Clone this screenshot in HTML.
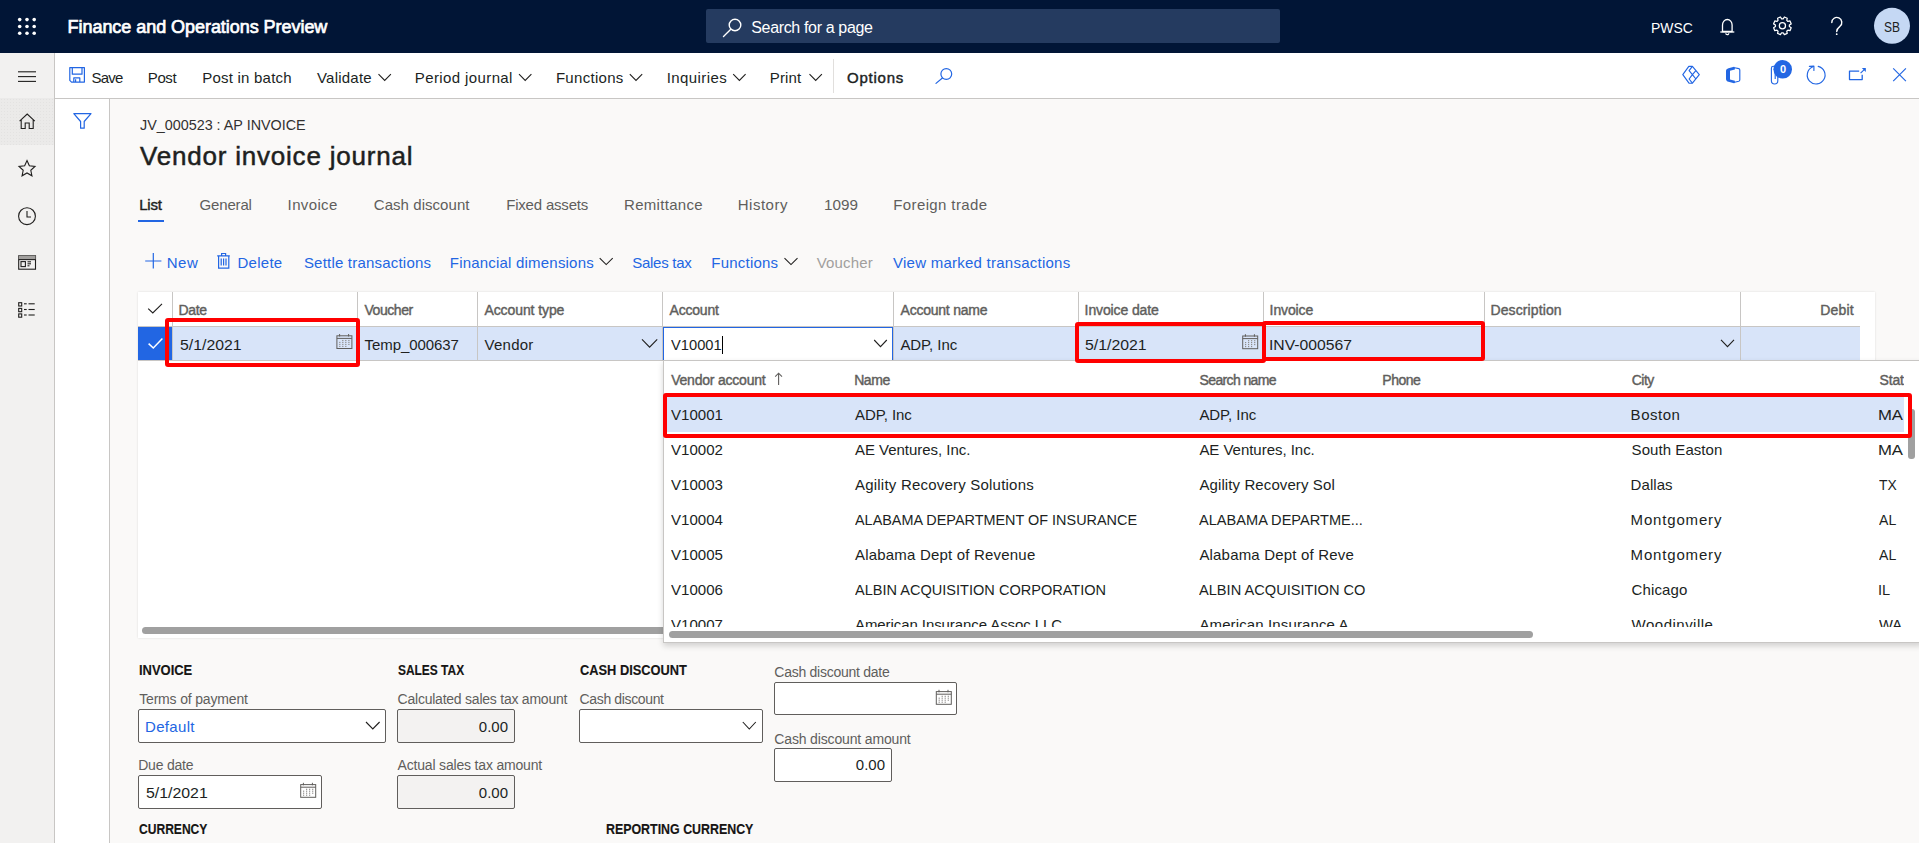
<!DOCTYPE html>
<html><head><meta charset="utf-8">
<style>
html,body{margin:0;padding:0;}
body{width:1919px;height:843px;overflow:hidden;position:relative;background:#faf9f8;font-family:"Liberation Sans",sans-serif;}
.a{position:absolute;box-sizing:border-box;}
.t{position:absolute;white-space:nowrap;font-family:"Liberation Sans",sans-serif;}
svg{position:absolute;overflow:visible;}
.red{position:absolute;box-sizing:border-box;border:4.4px solid #ff0000;border-radius:3px;}
.sb{position:absolute;background:#a0a0a0;border-radius:4px;}
</style></head><body>
<!-- header -->
<div class="a" style="left:0;top:0;width:1919px;height:53px;background:#011536"></div>
<svg style="left:0;top:0" width="60" height="53">
  <g fill="#fff"><circle cx="19.7" cy="19.6" r="1.8"/><circle cx="27" cy="19.6" r="1.8"/><circle cx="34.2" cy="19.6" r="1.8"/>
  <circle cx="19.7" cy="26.5" r="1.8"/><circle cx="27" cy="26.5" r="1.8"/><circle cx="34.2" cy="26.5" r="1.8"/>
  <circle cx="19.7" cy="33.3" r="1.8"/><circle cx="27" cy="33.3" r="1.8"/><circle cx="34.2" cy="33.3" r="1.8"/></g>
</svg>
<div class="a" style="left:706px;top:9px;width:574px;height:34px;background:#253b60;border-radius:2px"></div>
<svg style="left:0;top:0" width="1919" height="53">
  <g fill="none" stroke="#fff" stroke-width="1.4" stroke-linecap="round">
    <circle cx="735" cy="25" r="5.8"/><line x1="730.8" y1="29.3" x2="723.5" y2="36.4"/>
  </g>
  <!-- bell -->
  <g fill="none" stroke="#fff" stroke-width="1.3">
    <path d="M1722.5 31.5 V25 a4.8 5.5 0 0 1 9.6 0 V31.5 Z" stroke-linejoin="round"/>
    <line x1="1720.3" y1="32" x2="1734.3" y2="32"/>
    <path d="M1725.8 33.2 a1.5 1.5 0 0 0 3 0"/>
  </g>
  <!-- gear -->
  <g fill="none" stroke="#fff" stroke-width="1.25" stroke-linejoin="round">
    <path d="M1789.36 26.59 L1791.19 27.75 L1789.99 30.64 L1787.88 30.16 L1786.76 31.28 L1787.24 33.39 L1784.35 34.59 L1783.19 32.76 L1781.61 32.76 L1780.45 34.59 L1777.56 33.39 L1778.04 31.28 L1776.92 30.16 L1774.81 30.64 L1773.61 27.75 L1775.44 26.59 L1775.44 25.01 L1773.61 23.85 L1774.81 20.96 L1776.92 21.44 L1778.04 20.32 L1777.56 18.21 L1780.45 17.01 L1781.61 18.84 L1783.19 18.84 L1784.35 17.01 L1787.24 18.21 L1786.76 20.32 L1787.88 21.44 L1789.99 20.96 L1791.19 23.85 L1789.36 25.01 Z"/>
    <circle cx="1782.4" cy="25.8" r="3.1"/>
  </g>
  <!-- question -->
  <g fill="none" stroke="#fff" stroke-width="1.4" stroke-linecap="round">
    <path d="M1831.8 22.5 a5 5 0 1 1 8.2 3.8 c-2 1.6 -3.3 2.6 -3.3 5.2"/>
  </g>
  <circle cx="1836.7" cy="34.2" r="0.9" fill="#fff"/>
  <circle cx="1892" cy="25.8" r="18" fill="#c5d8f4"/>
</svg>

<!-- left nav -->
<div class="a" style="left:0;top:53px;width:55px;height:790px;background:#f2f1f0;border-right:1px solid #c8c6c4"></div>
<div class="a" style="left:0;top:98px;width:54px;height:47px;background-color:#ebeae9;background-image:radial-gradient(#e3e2e1 0.6px,transparent 0.7px);background-size:3px 3px"></div>
<svg style="left:0;top:0" width="55" height="843">
  <g fill="none" stroke="#201f1e" stroke-width="1.1">
    <line x1="18" y1="71.8" x2="36" y2="71.8"/><line x1="18" y1="76.6" x2="36" y2="76.6"/><line x1="18" y1="81.4" x2="36" y2="81.4"/>
    <!-- home -->
    <path d="M19.6 121.2 L27.2 114 L34.8 121.2 M21.2 119.8 V128.5 H25.2 V123 H29.2 V128.5 H33.2 V119.8" stroke-linejoin="miter"/>
    <!-- star -->
    <path d="M27.00 160.60 L29.35 165.76 L34.99 166.40 L30.80 170.24 L31.94 175.80 L27.00 173.00 L22.06 175.80 L23.20 170.24 L19.01 166.40 L24.65 165.76 Z" stroke-linejoin="miter"/>
    <!-- clock -->
    <circle cx="27" cy="216.2" r="8.4"/><path d="M27 211 V217 H31"/>
    <!-- workspace -->
    <rect x="18.7" y="255.8" width="16.8" height="13.4"/><rect x="18.7" y="255.8" width="16.8" height="3.6" fill="#a19f9d" stroke="none"/><line x1="18.7" y1="259.6" x2="35.5" y2="259.6"/>
    <rect x="21" y="261.6" width="4.4" height="5"/><line x1="27.5" y1="261.8" x2="31" y2="261.8"/><line x1="27.5" y1="263.8" x2="31" y2="263.8"/><line x1="27.5" y1="265.8" x2="29.5" y2="265.8"/>
    <!-- list -->
    <rect x="18.7" y="302.7" width="3" height="3.3"/><rect x="18.7" y="308.4" width="3" height="3.3"/><rect x="18.7" y="313.9" width="3" height="3.3"/>
    <line x1="24" y1="303.8" x2="26.7" y2="303.8"/><line x1="28.5" y1="303.8" x2="34.7" y2="303.8"/>
    <line x1="24" y1="309.5" x2="26.7" y2="309.5"/><line x1="28.5" y1="309.5" x2="34.7" y2="309.5"/>
    <line x1="24" y1="315" x2="26.7" y2="315"/><line x1="28.5" y1="315" x2="34.7" y2="315"/>
  </g>
</svg>

<!-- action bar -->
<div class="a" style="left:55px;top:53px;width:1864px;height:46px;background:#fff;border-bottom:1px solid #c8c6c4"></div>
<div class="a" style="left:833px;top:59px;width:1px;height:34px;background:#e1dfdd"></div>
<svg style="left:0;top:0" width="1919" height="99">
  <!-- save -->
  <g fill="none" stroke="#2266e3" stroke-width="1.2" stroke-linejoin="round">
    <path d="M69.8 67.7 H84.4 V82.1 H71.5 L69.8 80.4 Z"/><path d="M72.3 67.7 V74.2 H82 V67.7"/><path d="M73.8 82.1 V77.9 H79.8 V82.1"/><path d="M75.6 79.2 V82"/>
  </g>
  <g fill="none" stroke="#201f1e" stroke-width="1.1">
    <path d="M378.5 74.2 L384.7 80.4 L390.9 74.2"/>
    <path d="M519 74.2 L525.2 80.4 L531.4 74.2"/>
    <path d="M629.8 74.2 L636 80.4 L642.2 74.2"/>
    <path d="M733.2 74.2 L739.4 80.4 L745.6 74.2"/>
    <path d="M809.5 74.2 L815.7 80.4 L821.9 74.2"/>
  </g>
  <!-- search icon -->
  <g fill="none" stroke="#2266e3" stroke-width="1.2" stroke-linecap="round">
    <circle cx="946.3" cy="74" r="5.4"/><line x1="942.4" y1="78" x2="936" y2="83.4"/>
  </g>
  <!-- right icons -->
  <g fill="none" stroke="#2266e3" stroke-width="1.15" stroke-linejoin="round">
    <path d="M1682.8 74.6 L1688.8 66.4 L1692.4 66.4 L1699.3 74.6 L1692.4 83.2 L1689 83.2 Z"/>
    <path d="M1692.4 66.4 L1689.1 70.6 L1692.4 74.6 L1689.1 79 L1692.4 83.2 M1692.4 74.6 L1695.9 70.6 M1692.4 74.6 L1695.9 79"/>
    <!-- office -->
    <path d="M1734.6 67.8 L1738.8 68.6 Q1739.8 68.9 1739.8 70 V79.8 Q1739.8 80.9 1738.8 81.2 L1734.6 82.2"/>
    <!-- paperclip -->
    <path d="M1777.8 72 V80.8 a3.2 3.2 0 0 1 -6.4 0 V68.2 a1.9 1.9 0 0 1 3.8 0 V79"/>
    <!-- refresh -->
    <path d="M1818.2 66.4 A8.9 8.9 0 1 1 1812.4 67" stroke-linecap="round"/><path d="M1809.4 66.4 L1813.9 66.1 L1813.9 70.5" stroke-linecap="round"/>
    <!-- open new -->
    <path d="M1859.2 71.1 H1849.5 V79.6 H1862.2 V74.8" stroke-width="1.3"/><path d="M1860.6 73.2 L1865 68.8"/>
    <!-- close -->
    <path d="M1893.2 68.3 L1905.9 81.2 M1905.9 68.3 L1893.2 81.2"/>
  </g>
  <path d="M1726 71 C1726 69.5 1727 68.6 1728.5 68.2 L1734 66.8 L1734.9 67.2 L1734.9 69.5 L1730 70.8 V79.5 L1734.9 80.7 V83 L1734 83.3 L1728.5 81.8 C1727 81.4 1726 80.5 1726 79 Z" fill="#2266e3"/>
  <path d="M1861.8 68.1 H1865.8 V72 Z" fill="#2266e3"/>
  <circle cx="1782.7" cy="69.3" r="9.3" fill="#2266e3"/>
  <text x="1783" y="72.9" fill="#fff" font-size="11" font-weight="700" text-anchor="middle" font-family="Liberation Sans">0</text>
</svg>

<!-- filter pane -->
<div class="a" style="left:55px;top:99px;width:55px;height:744px;background:#fff;border-right:1px solid #c8c6c4"></div>
<svg style="left:0;top:0" width="110" height="140">
  <path d="M73.8 113.6 H91 L84.2 121.5 V128.2 H80.6 V121.5 Z" fill="none" stroke="#2266e3" stroke-width="1.2" stroke-linejoin="round"/>
</svg>

<!-- tab underline -->
<div class="a" style="left:138px;top:220px;width:26px;height:2px;background:#2266e3"></div>

<!-- toolbar icons -->
<svg style="left:0;top:0" width="1919" height="290">
  <g fill="none" stroke="#2266e3" stroke-width="1.2">
    <path d="M153.3 253 V268.5 M145.2 261 H161.4"/>
    <path d="M217.2 255.8 H229.8 M221.6 255.8 V253.5 H225.6 V255.8 M218.6 255.8 V268.2 H228.8 V255.8 M221.2 258.6 V265.6 M223.6 258.6 V265.6 M226 258.6 V265.6"/>
  </g>
  <g fill="none" stroke="#201f1e" stroke-width="1.1">
    <path d="M599.7 258.2 L606.2 264.6 L612.7 258.2"/>
    <path d="M784.5 258.2 L791 264.6 L797.5 258.2"/>
  </g>
</svg>

<!-- grid panel -->
<div class="a" style="left:138px;top:292px;width:1737px;height:346px;background:#fff;box-shadow:0 0 2px rgba(0,0,0,0.12)"></div>
<div class="a" style="left:138px;top:326px;width:1722px;height:1px;background:#c8c6c4"></div>
<div class="a" style="left:172px;top:327px;width:1688px;height:33px;background:#d8e4f9"></div>
<div class="a" style="left:138px;top:327px;width:34px;height:34px;background:#2266e3"></div>
<div class="a" style="left:138px;top:360px;width:1722px;height:1.4px;background:#c8c6c4"></div>
<!-- separators -->
<div class="a" style="left:172px;top:292px;width:1px;height:68px;background:#c8c6c4"></div>
<div class="a" style="left:357px;top:292px;width:1px;height:68px;background:#c8c6c4"></div>
<div class="a" style="left:477px;top:292px;width:1px;height:68px;background:#c8c6c4"></div>
<div class="a" style="left:662px;top:292px;width:1px;height:68px;background:#c8c6c4"></div>
<div class="a" style="left:893px;top:292px;width:1px;height:68px;background:#c8c6c4"></div>
<div class="a" style="left:1078px;top:292px;width:1px;height:68px;background:#c8c6c4"></div>
<div class="a" style="left:1263px;top:292px;width:1px;height:68px;background:#c8c6c4"></div>
<div class="a" style="left:1484px;top:292px;width:1px;height:68px;background:#c8c6c4"></div>
<div class="a" style="left:1740px;top:292px;width:1px;height:68px;background:#c8c6c4"></div>
<!-- account input -->
<div class="a" style="left:662.5px;top:327px;width:230.5px;height:33px;background:#fff;border:1.3px solid #2266e3;border-bottom:none"></div>
<div class="a" style="left:721.6px;top:336px;width:1.3px;height:18px;background:#000"></div>
<svg style="left:0;top:0" width="1919" height="400">
  <g fill="none" stroke="#201f1e" stroke-width="1.1">
    <path d="M148.2 308.6 L152.8 313 L162 303.8"/>
    <path d="M642 339.4 L649.6 347.2 L657.2 339.4"/>
    <path d="M874.2 340 L880.5 346.6 L886.8 340"/>
    <path d="M1721 339.8 L1727.5 346.6 L1734 339.8"/>
  </g>
  <path d="M148.6 343.6 L153.3 348 L162.4 338.6" fill="none" stroke="#fff" stroke-width="1.5"/>
  <g transform="translate(336.4 334)">
  <g fill="none" stroke="#605e5c" stroke-width="1"><rect x="0.5" y="1.8" width="15" height="12.7"/><line x1="0.5" y1="4.4" x2="15.5" y2="4.4"/><line x1="3.2" y1="0" x2="3.2" y2="2.5"/><line x1="12.2" y1="0" x2="12.2" y2="2.5"/></g>
  <g fill="#8a8886"><rect x="5.8" y="5.95" width="1.2" height="1.1"/><rect x="8.8" y="5.95" width="1.2" height="1.1"/><rect x="11.9" y="5.95" width="1.2" height="1.1"/><rect x="2.8" y="7.85" width="1.2" height="1.1"/><rect x="5.8" y="7.85" width="1.2" height="1.1"/><rect x="8.8" y="7.85" width="1.2" height="1.1"/><rect x="11.9" y="7.85" width="1.2" height="1.1"/><rect x="2.8" y="9.85" width="1.2" height="1.1"/><rect x="5.8" y="9.85" width="1.2" height="1.1"/><rect x="8.8" y="9.85" width="1.2" height="1.1"/><rect x="11.9" y="9.85" width="1.2" height="1.1"/><rect x="2.8" y="11.85" width="1.2" height="1.1"/><rect x="5.8" y="11.85" width="1.2" height="1.1"/><rect x="8.8" y="11.85" width="1.2" height="1.1"/></g></g>
  <g transform="translate(1242.2 334.2)">
  <g fill="none" stroke="#605e5c" stroke-width="1"><rect x="0.5" y="1.8" width="15" height="12.7"/><line x1="0.5" y1="4.4" x2="15.5" y2="4.4"/><line x1="3.2" y1="0" x2="3.2" y2="2.5"/><line x1="12.2" y1="0" x2="12.2" y2="2.5"/></g>
  <g fill="#8a8886"><rect x="5.8" y="5.95" width="1.2" height="1.1"/><rect x="8.8" y="5.95" width="1.2" height="1.1"/><rect x="11.9" y="5.95" width="1.2" height="1.1"/><rect x="2.8" y="7.85" width="1.2" height="1.1"/><rect x="5.8" y="7.85" width="1.2" height="1.1"/><rect x="8.8" y="7.85" width="1.2" height="1.1"/><rect x="11.9" y="7.85" width="1.2" height="1.1"/><rect x="2.8" y="9.85" width="1.2" height="1.1"/><rect x="5.8" y="9.85" width="1.2" height="1.1"/><rect x="8.8" y="9.85" width="1.2" height="1.1"/><rect x="11.9" y="9.85" width="1.2" height="1.1"/><rect x="2.8" y="11.85" width="1.2" height="1.1"/><rect x="5.8" y="11.85" width="1.2" height="1.1"/><rect x="8.8" y="11.85" width="1.2" height="1.1"/></g></g>

</svg>
<!-- grid scrollbar -->
<div class="sb" style="left:142px;top:627px;width:1000px;height:7px"></div>

<!-- popup -->
<div class="a" style="left:663px;top:360px;width:1260px;height:283px;background:#fff;border:1px solid #c8c6c4;box-shadow:0 3px 6px rgba(0,0,0,0.16)"></div>
<div class="a" style="left:663px;top:397px;width:1241px;height:35px;background:#d8e4f9"></div>
<svg style="left:0;top:0" width="1919" height="400">
  <path d="M778.6 385 V373.2 M775.2 376.6 L778.6 373.2 L782 376.6" fill="none" stroke="#605e5c" stroke-width="1.1"/>
</svg>
<div class="sb" style="left:1908px;top:409px;width:6.5px;height:49.5px;border-radius:3px"></div>
<div class="sb" style="left:669px;top:631px;width:864px;height:7px"></div>

<!-- red boxes -->
<div class="red" style="left:164.5px;top:317.8px;width:195.5px;height:49.5px"></div>
<div class="red" style="left:1074.5px;top:321.6px;width:191.5px;height:41.6px"></div>
<div class="red" style="left:1262px;top:320.6px;width:223px;height:40.7px"></div>
<div class="red" style="left:662.8px;top:392.6px;width:1249px;height:45.5px"></div>

<!-- bottom form -->
<div class="a" style="left:138px;top:709px;width:248px;height:34px;background:#fff;border:1px solid #605e5c;border-radius:2px"></div>
<div class="a" style="left:138px;top:775px;width:184px;height:34px;background:#fff;border:1px solid #605e5c;border-radius:2px"></div>
<div class="a" style="left:397px;top:709px;width:118px;height:34px;background:#f3f2f1;border:1px solid #605e5c;border-radius:2px"></div>
<div class="a" style="left:397px;top:775px;width:118px;height:34px;background:#f3f2f1;border:1px solid #605e5c;border-radius:2px"></div>
<div class="a" style="left:579px;top:709px;width:184px;height:34px;background:#fff;border:1px solid #605e5c;border-radius:2px"></div>
<div class="a" style="left:774px;top:682px;width:183px;height:33px;background:#fff;border:1px solid #605e5c;border-radius:2px"></div>
<div class="a" style="left:774px;top:748px;width:118px;height:34px;background:#fff;border:1px solid #605e5c;border-radius:2px"></div>
<div class="t" style="left:446px;top:718.9px;width:62px;text-align:right;font-size:15px;line-height:15px;color:#201f1e">0.00</div>
<div class="t" style="left:446px;top:784.9px;width:62px;text-align:right;font-size:15px;line-height:15px;color:#201f1e">0.00</div>
<div class="t" style="left:823px;top:757.3px;width:62px;text-align:right;font-size:15px;line-height:15px;color:#201f1e">0.00</div>
<svg style="left:0;top:0" width="1000" height="843">
  <g fill="none" stroke="#201f1e" stroke-width="1.1">
    <path d="M366 722 L372.8 729 L379.6 722"/>
    <path d="M742.8 722 L749.3 729 L755.8 722"/>
  </g>
  <g transform="translate(300.2 782.8)">
  <g fill="none" stroke="#605e5c" stroke-width="1"><rect x="0.5" y="1.8" width="15" height="12.7"/><line x1="0.5" y1="4.4" x2="15.5" y2="4.4"/><line x1="3.2" y1="0" x2="3.2" y2="2.5"/><line x1="12.2" y1="0" x2="12.2" y2="2.5"/></g>
  <g fill="#8a8886"><rect x="5.8" y="5.95" width="1.2" height="1.1"/><rect x="8.8" y="5.95" width="1.2" height="1.1"/><rect x="11.9" y="5.95" width="1.2" height="1.1"/><rect x="2.8" y="7.85" width="1.2" height="1.1"/><rect x="5.8" y="7.85" width="1.2" height="1.1"/><rect x="8.8" y="7.85" width="1.2" height="1.1"/><rect x="11.9" y="7.85" width="1.2" height="1.1"/><rect x="2.8" y="9.85" width="1.2" height="1.1"/><rect x="5.8" y="9.85" width="1.2" height="1.1"/><rect x="8.8" y="9.85" width="1.2" height="1.1"/><rect x="11.9" y="9.85" width="1.2" height="1.1"/><rect x="2.8" y="11.85" width="1.2" height="1.1"/><rect x="5.8" y="11.85" width="1.2" height="1.1"/><rect x="8.8" y="11.85" width="1.2" height="1.1"/></g></g>
  <g transform="translate(935.8 689.8)">
  <g fill="none" stroke="#605e5c" stroke-width="1"><rect x="0.5" y="1.8" width="15" height="12.7"/><line x1="0.5" y1="4.4" x2="15.5" y2="4.4"/><line x1="3.2" y1="0" x2="3.2" y2="2.5"/><line x1="12.2" y1="0" x2="12.2" y2="2.5"/></g>
  <g fill="#8a8886"><rect x="5.8" y="5.95" width="1.2" height="1.1"/><rect x="8.8" y="5.95" width="1.2" height="1.1"/><rect x="11.9" y="5.95" width="1.2" height="1.1"/><rect x="2.8" y="7.85" width="1.2" height="1.1"/><rect x="5.8" y="7.85" width="1.2" height="1.1"/><rect x="8.8" y="7.85" width="1.2" height="1.1"/><rect x="11.9" y="7.85" width="1.2" height="1.1"/><rect x="2.8" y="9.85" width="1.2" height="1.1"/><rect x="5.8" y="9.85" width="1.2" height="1.1"/><rect x="8.8" y="9.85" width="1.2" height="1.1"/><rect x="11.9" y="9.85" width="1.2" height="1.1"/><rect x="2.8" y="11.85" width="1.2" height="1.1"/><rect x="5.8" y="11.85" width="1.2" height="1.1"/><rect x="8.8" y="11.85" width="1.2" height="1.1"/></g></g>
</svg>

<span class="t" style="left:67.55px;top:17.76px;font-size:18px;line-height:18px;color:#fff;letter-spacing:-0.046px;-webkit-text-stroke:0.7px #fff">Finance and Operations Preview</span>
<span class="t" style="left:751.30px;top:19.85px;font-size:16px;line-height:16px;color:#fff;letter-spacing:-0.350px">Search for a page</span>
<span class="t" style="left:1650.60px;top:20.00px;font-size:15px;line-height:15px;color:#fff;transform:scaleX(0.9283);transform-origin:1.00px 0">PWSC</span>
<span class="t" style="left:1884.30px;top:18.90px;font-size:15px;line-height:15px;color:#201f1e;transform:scaleX(0.7998);transform-origin:-0.00px 0">SB</span>
<span class="t" style="left:91.60px;top:70.00px;font-size:15px;line-height:15px;color:#201f1e;letter-spacing:-0.816px">Save</span>
<span class="t" style="left:147.75px;top:70.00px;font-size:15px;line-height:15px;color:#201f1e;letter-spacing:-0.366px">Post</span>
<span class="t" style="left:202.30px;top:70.00px;font-size:15px;line-height:15px;color:#201f1e;letter-spacing:0.214px">Post in batch</span>
<span class="t" style="left:317.00px;top:70.00px;font-size:15px;line-height:15px;color:#201f1e;letter-spacing:0.221px">Validate</span>
<span class="t" style="left:414.80px;top:70.00px;font-size:15px;line-height:15px;color:#201f1e;letter-spacing:0.390px">Period journal</span>
<span class="t" style="left:555.90px;top:70.00px;font-size:15px;line-height:15px;color:#201f1e;letter-spacing:0.296px">Functions</span>
<span class="t" style="left:666.70px;top:70.00px;font-size:15px;line-height:15px;color:#201f1e;letter-spacing:0.425px">Inquiries</span>
<span class="t" style="left:769.80px;top:70.00px;font-size:15px;line-height:15px;color:#201f1e;letter-spacing:0.156px">Print</span>
<span class="t" style="left:847.11px;top:70.00px;font-size:15px;line-height:15px;color:#201f1e;letter-spacing:0.748px;-webkit-text-stroke:0.42px #201f1e">Options</span>
<span class="t" style="left:139.50px;top:117.40px;font-size:15px;line-height:15px;color:#323130;transform:scaleX(0.9569);transform-origin:-0.00px 0">JV_000523 : AP INVOICE</span>
<span class="t" style="left:139.95px;top:142.69px;font-size:26px;line-height:26px;color:#201f1e;letter-spacing:0.797px;-webkit-text-stroke:0.5px #201f1e">Vendor invoice journal</span>
<span class="t" style="left:139.21px;top:197.30px;font-size:15px;line-height:15px;color:#201f1e;letter-spacing:-0.198px;-webkit-text-stroke:0.42px #201f1e">List</span>
<span class="t" style="left:199.50px;top:197.30px;font-size:15px;line-height:15px;color:#605e5c;letter-spacing:-0.155px">General</span>
<span class="t" style="left:287.60px;top:197.30px;font-size:15px;line-height:15px;color:#605e5c;letter-spacing:0.369px">Invoice</span>
<span class="t" style="left:373.80px;top:197.30px;font-size:15px;line-height:15px;color:#605e5c;letter-spacing:0.051px">Cash discount</span>
<span class="t" style="left:506.20px;top:197.30px;font-size:15px;line-height:15px;color:#605e5c;letter-spacing:-0.191px">Fixed assets</span>
<span class="t" style="left:624.00px;top:197.30px;font-size:15px;line-height:15px;color:#605e5c;letter-spacing:0.298px">Remittance</span>
<span class="t" style="left:737.80px;top:197.30px;font-size:15px;line-height:15px;color:#605e5c;letter-spacing:0.488px">History</span>
<span class="t" style="left:824.00px;top:197.30px;font-size:15px;line-height:15px;color:#605e5c;transform:scaleX(1.0179);transform-origin:1.00px 0">1099</span>
<span class="t" style="left:893.30px;top:197.30px;font-size:15px;line-height:15px;color:#605e5c;letter-spacing:0.377px">Foreign trade</span>
<span class="t" style="left:166.70px;top:255.40px;font-size:15px;line-height:15px;color:#2266e3;letter-spacing:0.513px">New</span>
<span class="t" style="left:237.50px;top:255.40px;font-size:15px;line-height:15px;color:#2266e3;letter-spacing:0.257px">Delete</span>
<span class="t" style="left:303.90px;top:255.40px;font-size:15px;line-height:15px;color:#2266e3;letter-spacing:0.206px">Settle transactions</span>
<span class="t" style="left:449.80px;top:255.40px;font-size:15px;line-height:15px;color:#2266e3;letter-spacing:0.202px">Financial dimensions</span>
<span class="t" style="left:632.30px;top:255.40px;font-size:15px;line-height:15px;color:#2266e3;letter-spacing:-0.287px">Sales tax</span>
<span class="t" style="left:711.30px;top:255.40px;font-size:15px;line-height:15px;color:#2266e3;letter-spacing:0.221px">Functions</span>
<span class="t" style="left:816.80px;top:255.40px;font-size:15px;line-height:15px;color:#a19f9d;letter-spacing:0.142px">Voucher</span>
<span class="t" style="left:893.00px;top:255.40px;font-size:15px;line-height:15px;color:#2266e3;letter-spacing:0.249px">View marked transactions</span>
<span class="t" style="left:178.61px;top:302.95px;font-size:14px;line-height:14px;color:#605e5c;letter-spacing:-0.369px;-webkit-text-stroke:0.42px #605e5c">Date</span>
<span class="t" style="left:364.41px;top:302.95px;font-size:14px;line-height:14px;color:#605e5c;letter-spacing:-0.438px;-webkit-text-stroke:0.42px #605e5c">Voucher</span>
<span class="t" style="left:484.41px;top:302.95px;font-size:14px;line-height:14px;color:#605e5c;letter-spacing:-0.088px;-webkit-text-stroke:0.42px #605e5c">Account type</span>
<span class="t" style="left:669.61px;top:302.95px;font-size:14px;line-height:14px;color:#605e5c;letter-spacing:-0.219px;-webkit-text-stroke:0.42px #605e5c">Account</span>
<span class="t" style="left:900.61px;top:302.95px;font-size:14px;line-height:14px;color:#605e5c;letter-spacing:-0.239px;-webkit-text-stroke:0.42px #605e5c">Account name</span>
<span class="t" style="left:1084.61px;top:302.95px;font-size:14px;line-height:14px;color:#605e5c;letter-spacing:-0.121px;-webkit-text-stroke:0.42px #605e5c">Invoice date</span>
<span class="t" style="left:1269.61px;top:302.95px;font-size:14px;line-height:14px;color:#605e5c;letter-spacing:-0.115px;-webkit-text-stroke:0.42px #605e5c">Invoice</span>
<span class="t" style="left:1490.46px;top:302.95px;font-size:14px;line-height:14px;color:#605e5c;letter-spacing:0.114px;-webkit-text-stroke:0.42px #605e5c">Description</span>
<span class="t" style="left:1820.21px;top:302.95px;font-size:14px;line-height:14px;color:#605e5c;letter-spacing:0.172px;-webkit-text-stroke:0.42px #605e5c">Debit</span>
<span class="t" style="left:179.50px;top:337.10px;font-size:15px;line-height:15px;color:#201f1e;transform:scaleX(1.0543);transform-origin:-0.00px 0">5/1/2021</span>
<span class="t" style="left:364.60px;top:337.10px;font-size:15px;line-height:15px;color:#201f1e;letter-spacing:-0.083px">Temp_000637</span>
<span class="t" style="left:484.60px;top:337.10px;font-size:15px;line-height:15px;color:#201f1e;letter-spacing:0.231px">Vendor</span>
<span class="t" style="left:670.60px;top:337.10px;font-size:15px;line-height:15px;color:#201f1e;transform:scaleX(0.9791);transform-origin:-0.00px 0">V10001</span>
<span class="t" style="left:900.40px;top:337.10px;font-size:15px;line-height:15px;color:#201f1e;letter-spacing:-0.065px">ADP, Inc</span>
<span class="t" style="left:1085.40px;top:337.10px;font-size:15px;line-height:15px;color:#201f1e;transform:scaleX(1.0561);transform-origin:-0.00px 0">5/1/2021</span>
<span class="t" style="left:1269.30px;top:337.10px;font-size:15px;line-height:15px;color:#201f1e;transform:scaleX(1.0477);transform-origin:1.00px 0">INV-000567</span>
<span class="t" style="left:671.21px;top:373.15px;font-size:14px;line-height:14px;color:#605e5c;letter-spacing:-0.217px;-webkit-text-stroke:0.42px #605e5c">Vendor account</span>
<span class="t" style="left:854.21px;top:373.15px;font-size:14px;line-height:14px;color:#605e5c;letter-spacing:-0.460px;-webkit-text-stroke:0.42px #605e5c">Name</span>
<span class="t" style="left:1199.61px;top:373.15px;font-size:14px;line-height:14px;color:#605e5c;letter-spacing:-0.640px;-webkit-text-stroke:0.42px #605e5c">Search name</span>
<span class="t" style="left:1382.31px;top:373.15px;font-size:14px;line-height:14px;color:#605e5c;letter-spacing:-0.504px;-webkit-text-stroke:0.42px #605e5c">Phone</span>
<span class="t" style="left:1631.81px;top:373.15px;font-size:14px;line-height:14px;color:#605e5c;letter-spacing:-0.543px;-webkit-text-stroke:0.42px #605e5c">City</span>
<div style="position:absolute;left:0;top:0;width:1904px;height:843px;overflow:hidden"><span class="t" style="left:1879.51px;top:373.15px;font-size:14px;line-height:14px;color:#605e5c;letter-spacing:-0.140px;-webkit-text-stroke:0.42px #605e5c">Stat</span></div>
<span class="t" style="left:670.60px;top:406.90px;font-size:15px;line-height:15px;color:#201f1e;transform:scaleX(1.0044);transform-origin:-0.00px 0">V10001</span>
<span class="t" style="left:855.00px;top:406.90px;font-size:15px;line-height:15px;color:#201f1e;letter-spacing:-0.065px">ADP, Inc</span>
<span class="t" style="left:1199.40px;top:406.90px;font-size:15px;line-height:15px;color:#201f1e;letter-spacing:-0.065px">ADP, Inc</span>
<span class="t" style="left:1630.60px;top:406.90px;font-size:15px;line-height:15px;color:#201f1e;letter-spacing:0.529px">Boston</span>
<span class="t" style="left:1878.30px;top:406.90px;font-size:15px;line-height:15px;color:#201f1e;transform:scaleX(1.1165);transform-origin:1.00px 0">MA</span>
<span class="t" style="left:670.60px;top:441.90px;font-size:15px;line-height:15px;color:#201f1e;transform:scaleX(1.0044);transform-origin:-0.00px 0">V10002</span>
<span class="t" style="left:855.00px;top:441.90px;font-size:15px;line-height:15px;color:#201f1e;letter-spacing:-0.033px">AE Ventures, Inc.</span>
<span class="t" style="left:1199.40px;top:441.90px;font-size:15px;line-height:15px;color:#201f1e;letter-spacing:-0.033px">AE Ventures, Inc.</span>
<span class="t" style="left:1631.60px;top:441.90px;font-size:15px;line-height:15px;color:#201f1e;letter-spacing:0.061px">South Easton</span>
<span class="t" style="left:1878.30px;top:441.90px;font-size:15px;line-height:15px;color:#201f1e;transform:scaleX(1.1165);transform-origin:1.00px 0">MA</span>
<span class="t" style="left:670.60px;top:476.90px;font-size:15px;line-height:15px;color:#201f1e;transform:scaleX(1.0044);transform-origin:-0.00px 0">V10003</span>
<span class="t" style="left:855.00px;top:476.90px;font-size:15px;line-height:15px;color:#201f1e;letter-spacing:0.212px">Agility Recovery Solutions</span>
<span class="t" style="left:1199.40px;top:476.90px;font-size:15px;line-height:15px;color:#201f1e;letter-spacing:0.103px">Agility Recovery Sol</span>
<span class="t" style="left:1630.60px;top:476.90px;font-size:15px;line-height:15px;color:#201f1e;letter-spacing:0.064px">Dallas</span>
<span class="t" style="left:1879.30px;top:476.90px;font-size:15px;line-height:15px;color:#201f1e;transform:scaleX(0.9237);transform-origin:-0.00px 0">TX</span>
<span class="t" style="left:670.60px;top:511.90px;font-size:15px;line-height:15px;color:#201f1e;transform:scaleX(1.0044);transform-origin:-0.00px 0">V10004</span>
<span class="t" style="left:855.00px;top:511.90px;font-size:15px;line-height:15px;color:#201f1e;transform:scaleX(0.9613);transform-origin:-0.00px 0">ALABAMA DEPARTMENT OF INSURANCE</span>
<span class="t" style="left:1199.40px;top:511.90px;font-size:15px;line-height:15px;color:#201f1e;transform:scaleX(0.9719);transform-origin:-0.00px 0">ALABAMA DEPARTME...</span>
<span class="t" style="left:1630.60px;top:511.90px;font-size:15px;line-height:15px;color:#201f1e;letter-spacing:0.826px">Montgomery</span>
<span class="t" style="left:1879.30px;top:511.90px;font-size:15px;line-height:15px;color:#201f1e;transform:scaleX(0.9386);transform-origin:-0.00px 0">AL</span>
<span class="t" style="left:670.60px;top:546.90px;font-size:15px;line-height:15px;color:#201f1e;transform:scaleX(1.0044);transform-origin:-0.00px 0">V10005</span>
<span class="t" style="left:855.00px;top:546.90px;font-size:15px;line-height:15px;color:#201f1e;letter-spacing:0.195px">Alabama Dept of Revenue</span>
<span class="t" style="left:1199.40px;top:546.90px;font-size:15px;line-height:15px;color:#201f1e;letter-spacing:0.180px">Alabama Dept of Reve</span>
<span class="t" style="left:1630.60px;top:546.90px;font-size:15px;line-height:15px;color:#201f1e;letter-spacing:0.826px">Montgomery</span>
<span class="t" style="left:1879.30px;top:546.90px;font-size:15px;line-height:15px;color:#201f1e;transform:scaleX(0.9386);transform-origin:-0.00px 0">AL</span>
<span class="t" style="left:670.60px;top:581.90px;font-size:15px;line-height:15px;color:#201f1e;transform:scaleX(1.0044);transform-origin:-0.00px 0">V10006</span>
<span class="t" style="left:855.00px;top:581.90px;font-size:15px;line-height:15px;color:#201f1e;transform:scaleX(0.9698);transform-origin:-0.00px 0">ALBIN ACQUISITION CORPORATION</span>
<span class="t" style="left:1199.40px;top:581.90px;font-size:15px;line-height:15px;color:#201f1e;transform:scaleX(0.9741);transform-origin:-0.00px 0">ALBIN ACQUISITION CO</span>
<span class="t" style="left:1631.60px;top:581.90px;font-size:15px;line-height:15px;color:#201f1e;letter-spacing:0.118px">Chicago</span>
<span class="t" style="left:1878.30px;top:581.90px;font-size:15px;line-height:15px;color:#201f1e;transform:scaleX(0.9760);transform-origin:1.00px 0">IL</span>
<div style="position:absolute;left:0;top:0;width:1919px;height:627px;overflow:hidden"><span class="t" style="left:670.60px;top:616.90px;font-size:15px;line-height:15px;color:#201f1e;transform:scaleX(1.0044);transform-origin:-0.00px 0">V10007</span></div>
<div style="position:absolute;left:0;top:0;width:1919px;height:627px;overflow:hidden"><span class="t" style="left:855.00px;top:616.90px;font-size:15px;line-height:15px;color:#201f1e;letter-spacing:-0.080px">American Insurance Assoc LLC</span></div>
<div style="position:absolute;left:0;top:0;width:1919px;height:627px;overflow:hidden"><span class="t" style="left:1199.40px;top:616.90px;font-size:15px;line-height:15px;color:#201f1e;letter-spacing:0.128px">American Insurance A</span></div>
<div style="position:absolute;left:0;top:0;width:1919px;height:627px;overflow:hidden"><span class="t" style="left:1631.60px;top:616.90px;font-size:15px;line-height:15px;color:#201f1e;letter-spacing:0.491px">Woodinville</span></div>
<div style="position:absolute;left:0;top:0;width:1919px;height:627px;overflow:hidden"><span class="t" style="left:1879.30px;top:616.90px;font-size:15px;line-height:15px;color:#201f1e;transform:scaleX(0.9830);transform-origin:-0.00px 0">WA</span></div>
<span class="t" style="left:139.27px;top:662.85px;font-size:14px;line-height:14px;color:#161514;font-weight:700;-webkit-text-stroke:0.15px #161514;transform:scaleX(0.9254);transform-origin:-0.07px 0">INVOICE</span>
<span class="t" style="left:397.68px;top:662.85px;font-size:14px;line-height:14px;color:#161514;font-weight:700;-webkit-text-stroke:0.15px #161514;transform:scaleX(0.8527);transform-origin:-0.07px 0">SALES TAX</span>
<span class="t" style="left:579.68px;top:662.85px;font-size:14px;line-height:14px;color:#161514;font-weight:700;-webkit-text-stroke:0.15px #161514;transform:scaleX(0.9159);transform-origin:-0.07px 0">CASH DISCOUNT</span>
<span class="t" style="left:139.27px;top:822.45px;font-size:14px;line-height:14px;color:#161514;font-weight:700;-webkit-text-stroke:0.15px #161514;transform:scaleX(0.8621);transform-origin:-0.07px 0">CURRENCY</span>
<span class="t" style="left:606.48px;top:822.35px;font-size:14px;line-height:14px;color:#161514;font-weight:700;-webkit-text-stroke:0.15px #161514;transform:scaleX(0.8854);transform-origin:-0.07px 0">REPORTING CURRENCY</span>
<span class="t" style="left:139.20px;top:692.45px;font-size:14px;line-height:14px;color:#605e5c;letter-spacing:-0.171px">Terms of payment</span>
<span class="t" style="left:397.60px;top:692.45px;font-size:14px;line-height:14px;color:#605e5c;letter-spacing:-0.234px">Calculated sales tax amount</span>
<span class="t" style="left:579.60px;top:692.45px;font-size:14px;line-height:14px;color:#605e5c;letter-spacing:-0.361px">Cash discount</span>
<span class="t" style="left:138.20px;top:758.35px;font-size:14px;line-height:14px;color:#605e5c;letter-spacing:-0.219px">Due date</span>
<span class="t" style="left:397.60px;top:758.35px;font-size:14px;line-height:14px;color:#605e5c;letter-spacing:-0.184px">Actual sales tax amount</span>
<span class="t" style="left:774.30px;top:665.45px;font-size:14px;line-height:14px;color:#605e5c;letter-spacing:-0.263px">Cash discount date</span>
<span class="t" style="left:774.30px;top:731.65px;font-size:14px;line-height:14px;color:#605e5c;letter-spacing:-0.153px">Cash discount amount</span>
<span class="t" style="left:145.00px;top:719.00px;font-size:15px;line-height:15px;color:#2266e3;letter-spacing:0.323px">Default</span>
<span class="t" style="left:146.00px;top:785.00px;font-size:15px;line-height:15px;color:#201f1e;transform:scaleX(1.0578);transform-origin:-0.00px 0">5/1/2021</span>
</body></html>
